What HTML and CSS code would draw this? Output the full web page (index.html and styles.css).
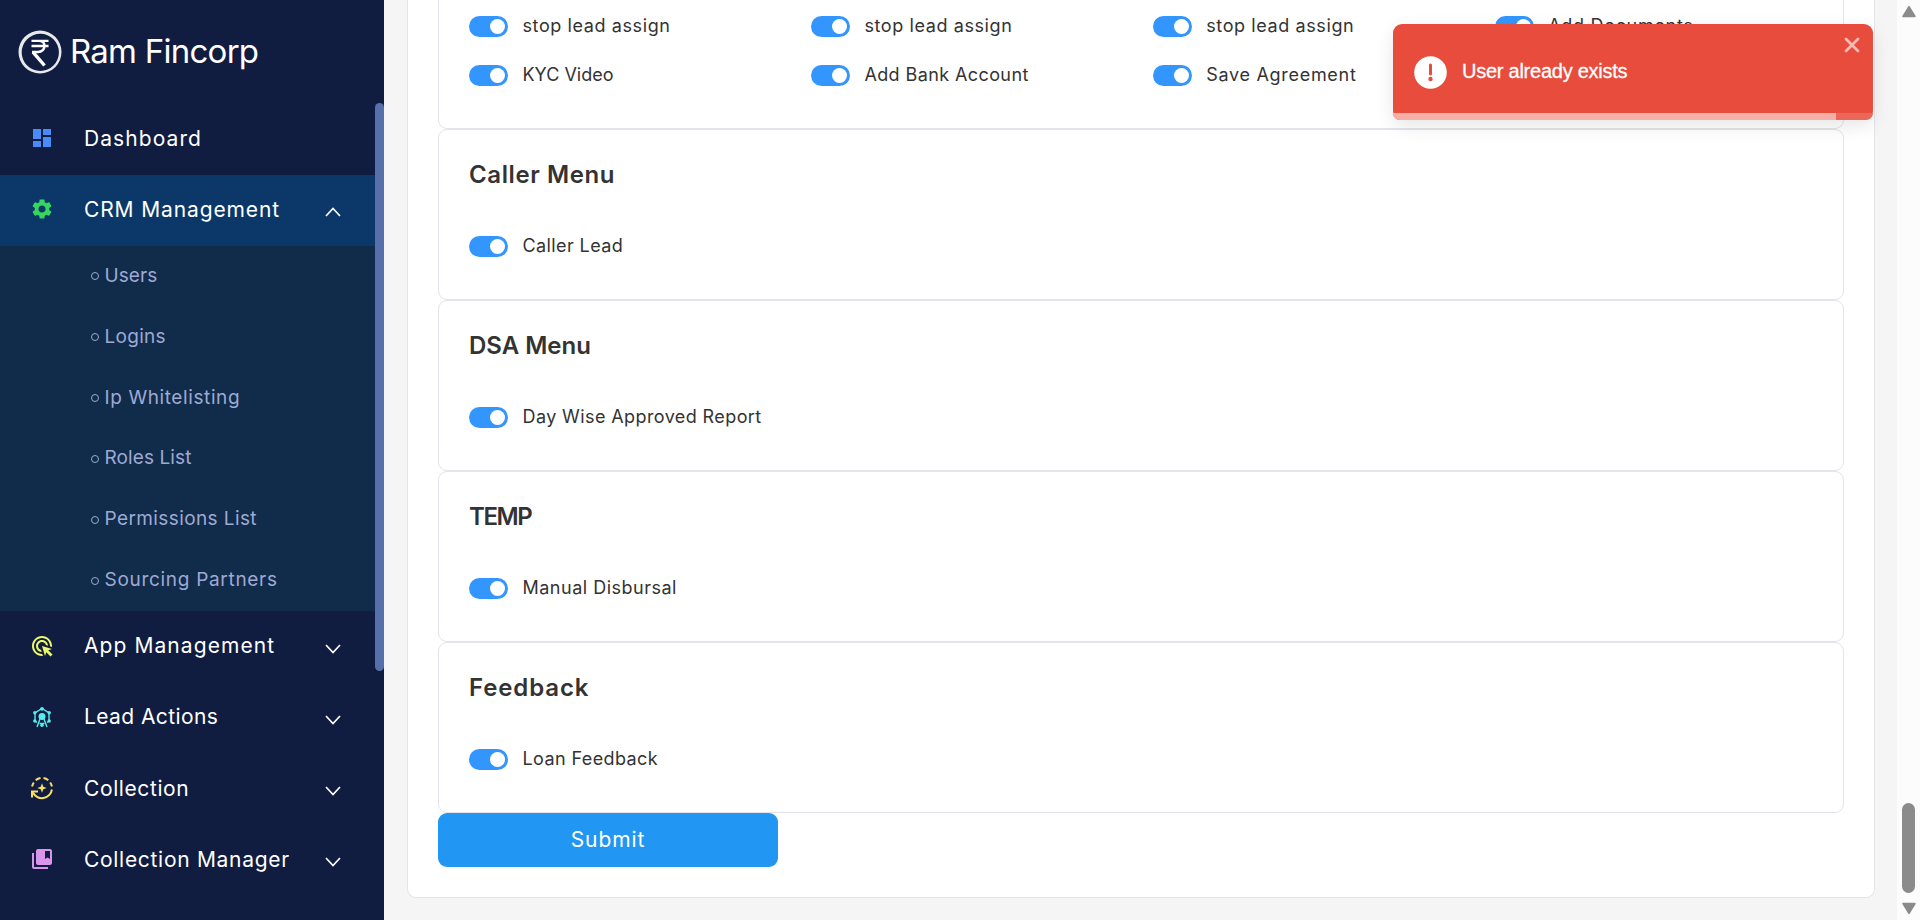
FILE: index.html
```html
<!DOCTYPE html>
<html lang="en">
<head>
<meta charset="utf-8">
<title>Ram Fincorp</title>
<link rel="stylesheet" href="styles.css">
</head>
<body>
<div class="app">
  <aside class="sidebar">
    <div class="logo">
      <svg class="logo-mark" viewBox="0 0 44 44" fill="none">
        <path fill="#e8e8ea" fill-rule="evenodd" d="M22 0.500a21.500 21.500 0 1 1 0 43a21.500 21.500 0 1 1 0-43zM22.300 3.800a18.600 18.600 0 1 0 0 37.200a18.600 18.600 0 1 0 0-37.200z"/>
        <path stroke="#fff" stroke-width="2.400" d="M13.500 10.900h17M13.500 16h17M14 10.900h6.500c4 0 6 2 6 5.100s-2.500 6-6.500 6h-6"/>
        <path stroke="#fff" stroke-width="3.400" d="M15 22.200L26.500 35.500"/>
      </svg>
      <span class="logo-text">Ram Fincorp</span>
    </div>
    <nav class="menu">
      <div class="item">
        <svg class="icon blue" viewBox="0 0 24 24"><path d="M3 13h8V3H3v10zm0 8h8v-6H3v6zm10 0h8V11h-8v10zm0-18v6h8V3h-8z"/></svg>
        <span class="ls-10">Dashboard</span>
      </div>
      <div class="item active">
        <svg class="icon green" viewBox="0 0 24 24"><path d="M19.140 12.940c.04-.3.060-.61.060-.94 0-.32-.02-.64-.070-.94l2.030-1.580c.18-.14.230-.41.120-.61l-1.920-3.320c-.12-.22-.37-.29-.59-.22l-2.390.96c-.5-.38-1.030-.7-1.620-.94l-.36-2.540c-.04-.24-.24-.41-.48-.41h-3.840c-.24 0-.43.17-.47.41l-.36 2.540c-.59.24-1.130.57-1.620.94l-2.390-.96c-.22-.08-.47 0-.59.22L2.740 8.870c-.12.21-.08.47.12.61l2.030 1.580c-.05.3-.09.63-.09.94s.02.64.07.94l-2.030 1.580c-.18.14-.23.41-.12.61l1.920 3.320c.12.22.37.29.59.22l2.390-.96c.5.38 1.030.7 1.620.94l.36 2.540c.05.24.24.41.48.41h3.840c.24 0 .44-.17.47-.41l.36-2.540c.59-.24 1.130-.56 1.620-.94l2.390.96c.22.08.47 0 .59-.22l1.920-3.320c.12-.22.07-.47-.12-.61l-2.010-1.580zM12 15.600c-1.980 0-3.600-1.620-3.600-3.600s1.620-3.600 3.600-3.600 3.600 1.620 3.600 3.600-1.620 3.600-3.600 3.600z"/></svg>
        <span class="ls-8">CRM Management</span>
        <svg class="chev" viewBox="0 0 18 12"><path d="M2 10l7-7.500 7 7.500"/></svg>
      </div>
      <ul class="sub">
        <li><i class="dot"></i><span class="ls-1">Users</span></li>
        <li><i class="dot"></i><span class="ls-3">Logins</span></li>
        <li><i class="dot"></i><span class="ls-6">Ip Whitelisting</span></li>
        <li><i class="dot"></i><span class="ls-1">Roles List</span></li>
        <li><i class="dot"></i><span class="ls-4">Permissions List</span></li>
        <li><i class="dot"></i><span class="ls-7">Sourcing Partners</span></li>
      </ul>
      <div class="item">
        <svg class="icon lime" viewBox="0 0 24 24"><path d="M11.710 17.990C8.530 17.840 6 15.220 6 12c0-3.310 2.690-6 6-6 3.220 0 5.840 2.530 5.990 5.710l-2.100-.63C15.480 9.310 13.890 8 12 8c-2.210 0-4 1.790-4 4 0 1.890 1.310 3.480 3.080 3.890l.63 2.100zM22 12c0 .3-.01.6-.04.9l-1.970-.59c.01-.1.01-.21.01-.31 0-4.420-3.580-8-8-8s-8 3.580-8 8 3.580 8 8 8c.1 0 .21 0 .31-.01l.59 1.970c-.3.03-.6.04-.9.040-5.520 0-10-4.480-10-10S6.480 2 12 2s10 4.480 10 10zm-3.770 4.260L22 15l-10-3 3 10 1.260-3.770 4.270 4.270 1.980-1.980-4.280-4.260z"/></svg>
        <span class="ls-10">App Management</span>
        <svg class="chev" viewBox="0 0 18 12"><path d="M2 2l7 7.500 7-7.500"/></svg>
      </div>
      <div class="item">
        <svg class="icon cyan" viewBox="0 0 24 24">
          <path class="line" d="M13 4l6 3.800v8l-2 1.700M11 4L5 7.800v8l2 1.700"/>
          <circle cx="12" cy="3.800" r="1.900"/><circle cx="19.200" cy="7.800" r="1.700"/><circle cx="4.800" cy="7.800" r="1.700"/><circle cx="19.200" cy="16" r="1.700"/><circle cx="4.800" cy="16" r="1.700"/>
          <circle cx="12" cy="11.500" r="3.500"/><circle cx="12" cy="20.200" r="1.800"/>
          <path class="line" d="M10 14L7 22M14 14l3 8M9.500 18.500h5"/>
        </svg>
        <span class="ls-4">Lead Actions</span>
        <svg class="chev" viewBox="0 0 18 12"><path d="M2 2l7 7.500 7-7.500"/></svg>
      </div>
      <div class="item">
        <svg class="icon yellow" viewBox="0 0 24 24">
          <path class="line2" d="M2.100 10.500a10 10 0 0 1 1.700-4M5.700 4.200a10 10 0 0 1 4.800-2.100M13.500 2.100a10 10 0 0 1 4.800 2.100M20.200 6.500a10 10 0 0 1 1.700 4M21.900 13.500A10 10 0 0 1 3 16.500"/>
          <path class="line2" d="M2 21.500v-6h6"/>
          <path d="M12 7.300l1.300 3.400 3.400 1.300-3.400 1.300L12 16.700l-1.300-3.400L7.300 12l3.400-1.300z"/>
        </svg>
        <span class="ls-6">Collection</span>
        <svg class="chev" viewBox="0 0 18 12"><path d="M2 2l7 7.500 7-7.500"/></svg>
      </div>
      <div class="item">
        <svg class="icon pink" viewBox="0 0 24 24"><path d="M4 6H2v14c0 1.100.9 2 2 2h14v-2H4V6zM20 2H8c-1.100 0-2 .9-2 2v12c0 1.100.9 2 2 2h12c1.100 0 2-.9 2-2V4c0-1.100-.9-2-2-2zm0 10l-2.500-1.500L15 12V4h5v8z"/></svg>
        <span class="ls-7">Collection Manager</span>
        <svg class="chev" viewBox="0 0 18 12"><path d="M2 2l7 7.500 7-7.500"/></svg>
      </div>
      <div class="side-thumb"></div>
    </nav>
  </aside>

  <main class="main">
    <div class="panel">
      <section class="card card-first">
        <div class="grid">
          <label class="row"><i class="switch"></i><span class="ls-6">stop lead assign</span></label>
          <label class="row"><i class="switch"></i><span class="ls-6">stop lead assign</span></label>
          <label class="row"><i class="switch"></i><span class="ls-6">stop lead assign</span></label>
          <label class="row"><i class="switch"></i><span class="ls-7">Add Documents</span></label>
          <label class="row"><i class="switch"></i><span>KYC Video</span></label>
          <label class="row"><i class="switch"></i><span class="ls-4">Add Bank Account</span></label>
          <label class="row"><i class="switch"></i><span class="ls-7">Save Agreement</span></label>
        </div>
      </section>
      <section class="card">
        <h2 class="ls-6">Caller Menu</h2>
        <div class="grid"><label class="row"><i class="switch"></i><span class="ls-4">Caller Lead</span></label></div>
      </section>
      <section class="card">
        <h2>DSA Menu</h2>
        <div class="grid"><label class="row"><i class="switch"></i><span class="ls-4">Day Wise Approved Report</span></label></div>
      </section>
      <section class="card">
        <h2 class="tight">TEMP</h2>
        <div class="grid"><label class="row"><i class="switch"></i><span class="ls-5">Manual Disbursal</span></label></div>
      </section>
      <section class="card">
        <h2 class="ls-8">Feedback</h2>
        <div class="grid"><label class="row"><i class="switch"></i><span class="ls-4">Loan Feedback</span></label></div>
      </section>
      <button class="submit">Submit</button>
    </div>
  </main>

  <div class="scroll">
    <svg class="arrow" viewBox="0 0 14 12"><path d="M7 1.500L12.500 10.500H1.500z"/></svg>
    <div class="thumb"></div>
    <svg class="arrow" viewBox="0 0 14 12"><path d="M7 10.500L12.500 1.500H1.500z"/></svg>
  </div>
</div>

<div class="toast">
  <svg class="alert" viewBox="0 0 33 33"><circle cx="16.500" cy="16.500" r="16.300" fill="#fff"/><path d="M16.500 9v9" stroke="#e74c3c" stroke-width="3" stroke-linecap="round"/><circle cx="16.500" cy="23" r="2.200" fill="#e74c3c"/></svg>
  <span class="toast-text">User already exists</span>
  <svg class="close" viewBox="0 0 16 16"><path d="M2 2l12 12M14 2L2 14"/></svg>
  <div class="track"><div class="bar"></div></div>
</div>
</body>
</html>
```

FILE: styles.css
```css
* { box-sizing: border-box; }
body {
  margin: 0;
  height: 920px;
  overflow: hidden;
  background: #f5f5f5;
  color: #333;
  font-family: Inter, "Open Sans", sans-serif;
}
.app { display: flex; height: 920px; }

/* Sidebar */
.sidebar {
  flex: none;
  width: 384px;
  height: 920px;
  overflow: hidden;
  background: #111c41;
}
.logo {
  display: flex;
  align-items: center;
  gap: 8px;
  height: 103px;
  padding-left: 18px;
}
.logo-mark { width: 44px; height: 44px; }
.logo-text {
  margin-top: -1px;
  color: #fff;
  font-size: 33px;
  line-height: 40px;
  letter-spacing: -0.75px;
  white-space: nowrap;
}
.menu { position: relative; padding-top: 0.5px; }
.item {
  display: flex;
  align-items: center;
  width: 375px;
  height: 71.25px;
  padding: 0 33px 2px 30px;
  color: #fff;
  font-size: 21px;
  white-space: nowrap;
}
.item.active { background: #0b3869; }
.icon { flex: none; width: 24px; height: 24px; margin-right: 30px; fill: currentColor; }
.icon .line { fill: none; stroke: currentColor; stroke-width: 1.4; }
.icon .line2 { fill: none; stroke: currentColor; stroke-width: 2; }
.blue { color: #4a8cf7; }
.green { color: #34d65c; }
.lime { color: #eaf86a; }
.cyan { color: #56ecec; }
.yellow { color: #fbe060; }
.pink { color: #d895ea; }
.chev {
  width: 18px;
  height: 12px;
  margin: 6px 0 0 auto;
  fill: none;
  stroke: #fff;
  stroke-width: 1.7;
}
.sub {
  margin: 0;
  padding: 0;
  width: 375px;
  list-style: none;
  background: #102c4a;
}
.sub li {
  display: flex;
  align-items: center;
  height: 60.83px;
  padding: 0 0 2px 90.5px;
  color: #9fa9d3;
  font-size: 19px;
}
.dot {
  width: 8px;
  height: 8px;
  margin: 2px 6px 0 0;
  border: 1px solid #9fa9d3;
  border-radius: 50%;
}
.side-thumb {
  position: absolute;
  top: 0;
  right: 0;
  width: 9px;
  height: 568px;
  border-radius: 5px;
  background: #5670ab;
}

/* Content */
.main { flex: 1; padding: 0 22.5px 0 23px; }
.panel {
  height: 897.5px;
  padding: 0 30px;
  border: 1px solid #e4e4e8;
  border-top: 0;
  border-radius: 0 0 9px 9px;
  background: #fff;
}
.card {
  height: 171px;
  padding: 30px 30px 28px;
  border: 1px solid #e4e4ea;
  border-radius: 9px;
}
.card-first {
  height: 129px;
  padding-top: 2px;
  border-top: 0;
  border-radius: 0 0 9px 9px;
}
.card h2 {
  margin: 0 0 33px;
  font-size: 24px;
  font-weight: 600;
  line-height: 29px;
}
.grid { display: grid; grid-template-columns: repeat(4, 1fr); column-gap: 24px; }
.row {
  display: flex;
  align-items: center;
  gap: 14.5px;
  height: 49px;
  font-size: 18px;
  white-space: nowrap;
}
.row span { padding-bottom: 2px; }
.switch {
  display: flex;
  justify-content: flex-end;
  align-items: center;
  width: 39px;
  height: 21px;
  padding-right: 3px;
  border-radius: 11px;
  background: #3396ff;
}
.switch::after {
  content: "";
  width: 15px;
  height: 15px;
  border-radius: 50%;
  background: #fff;
}
.submit {
  display: block;
  width: 340px;
  height: 54px;
  padding: 0 0 1px;
  border: 0;
  border-radius: 9px;
  background: #2196f3;
  color: #fff;
  font: 400 21px Inter, sans-serif;
  letter-spacing: 0.9px;
}

/* Page scrollbar */
.scroll {
  display: flex;
  flex-direction: column;
  align-items: center;
  flex: none;
  width: 23px;
  height: 920px;
  padding: 5px 0;
  background: #fcfcfc;
}
.arrow { width: 16px; height: 13px; fill: #8b8b8b; stroke: #8b8b8b; stroke-width: 1.5; stroke-linejoin: round; }
.thumb { width: 13px; height: 90px; margin: auto 0 9px; border-radius: 7px; background: #8b8b8b; }

/* Toast */
.toast {
  position: absolute;
  top: 24px;
  left: 1393px;
  display: flex;
  align-items: center;
  width: 480px;
  height: 96px;
  padding: 1px 14px 0 21px;
  border-radius: 9px;
  background: #e74c3c;
  box-shadow: 0 6px 18px rgba(0, 0, 0, 0.1);
}
.alert { width: 33px; height: 33px; }
.toast-text {
  margin: -2px 0 0 15px;
  color: #fff;
  font: 20px "Liberation Sans", Arial, sans-serif;
  letter-spacing: -0.25px;
  -webkit-text-stroke: 0.3px #fff;
}
.close {
  width: 16px;
  height: 16px;
  margin: -55px -1px 0 auto;
  fill: none;
  stroke: #fabbb5;
  stroke-width: 2.8;
  stroke-linecap: round;
}
.track {
  position: absolute;
  left: 0;
  right: 0;
  bottom: 0;
  height: 7px;
  overflow: hidden;
  border-radius: 0 0 9px 9px;
  background: #eb6759;
}
.bar { width: 443px; height: 7px; background: #f6afa8; }

/* Letter spacing steps */
.tight { letter-spacing: -1.4px; }
.ls-1 { letter-spacing: 0.1px; }
.ls-3 { letter-spacing: 0.3px; }
.ls-4 { letter-spacing: 0.4px; }
.ls-5 { letter-spacing: 0.5px; }
.ls-6 { letter-spacing: 0.6px; }
.ls-7 { letter-spacing: 0.7px; }
.ls-8 { letter-spacing: 0.87px; }
.ls-10 { letter-spacing: 1.08px; }
```
